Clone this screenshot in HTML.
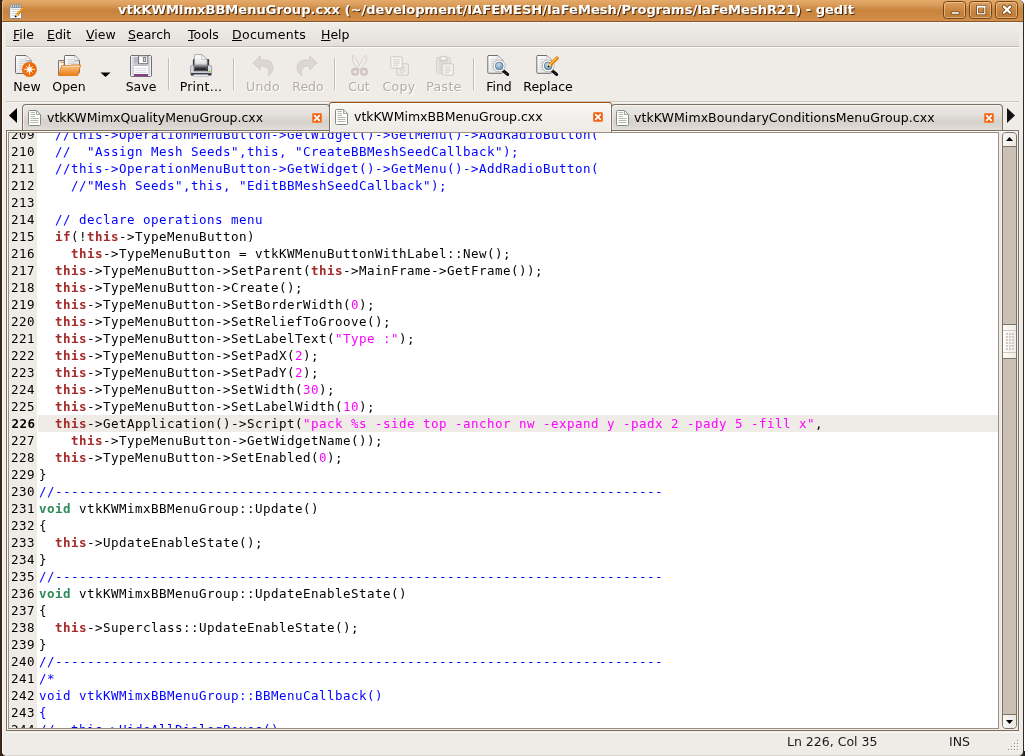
<!DOCTYPE html>
<html><head><meta charset="utf-8"><title>gedit</title>
<style>

html,body{margin:0;padding:0}
body{width:1025px;height:756px;overflow:hidden;position:relative;background:#fff;
 font-family:"DejaVu Sans","Liberation Sans",sans-serif;font-size:12.5px;color:#000;line-height:16px}
.a{position:absolute}
.mi,.tl,.tabtxt,.st,#ttext{will-change:transform}
#frame{left:0;top:0;width:1024px;height:756px;background:linear-gradient(to right,#46270f 0,#46270f 1px,#2b221b 1px,#2b221b 2px,#3a2a20 2px,#3a2a20 1022px,#2e2b29 1022px);border-radius:0 5px 0 0}
#win{left:2px;top:0;width:1021px;height:756px;background:#efebe7;border-radius:3px 5px 5px 5px;overflow:hidden;box-shadow:inset 1px 0 0 #fbfaf9, inset 0 -1px 0 #d9d2ca}
#title{left:0;top:0;width:1021px;height:21px;box-shadow:inset 1px 0 0 rgba(255,225,185,.5);border-bottom:1px solid #85562a;
 background:linear-gradient(to bottom,#e6aa6a 0px,#d99c5a 5px,#c8843c 10px,#c9853d 12px,#d38f4b 21px)}
#ttext{left:0;top:1px;width:968px;text-align:center;font-weight:bold;color:#fff;font-size:13.05px;
 text-shadow:1px 1px 0 #4a2a10;white-space:nowrap;line-height:18px}
.wb{top:1px;width:23px;height:18px;border:1px solid #704619;border-radius:3.5px;box-sizing:border-box;
 background:linear-gradient(to bottom,#dda063,#c88640 50%,#bd7b36);box-shadow:inset 0 0 0 1px rgba(255,222,175,.5)}
#menubar{left:4px;top:22px;width:1013px;height:25px;border-top:1px solid #faf9f7;border-bottom:1px solid #c6bcb1;box-sizing:border-box;
 background:linear-gradient(to bottom,#f0ede9,#eae6e1 50%,#e4dfd9)}
.mi{top:27px;white-space:nowrap}
.mi u{text-decoration:underline;text-underline-offset:1px;text-decoration-thickness:1px}
#tbtop{left:4px;top:47px;width:1013px;height:1px;background:#fbfaf9}
#tbbot{left:4px;top:101px;width:1013px;height:1px;background:#cfc6bb;box-shadow:0 1px 0 #f6f4f1}
.tl{top:79px;white-space:nowrap;text-align:center}
.dis{color:#b5ada3;text-shadow:1px 1px 0 #fff}
.sep{top:58px;width:1px;height:32px;background:#c5bdb3;box-shadow:1px 0 0 #fbfaf8}
.ic{overflow:visible}
/* tabs */
.tab{box-sizing:border-box;border:1px solid #7d7262;border-bottom:none;border-radius:4px 4px 0 0;
 background:linear-gradient(to bottom,#ebe8e4 0,#e5e1dc 35%,#d7d2cb 62%,#dad5cf 80%,#e4e0db 100%);box-shadow:inset 1px 1px 0 rgba(255,255,255,.5)}
.tabtxt{white-space:nowrap}
.cl{width:10px;height:10px;background:#f0600f;border-radius:2px}
/* editor */
#nbframe{left:4px;top:130px;width:1013px;height:601px;box-sizing:border-box;border:1px solid #7d7262;box-shadow:inset 1px 1px 0 #fbfaf9}
#view{position:absolute;left:6px;top:132px;width:991px;height:597px;box-sizing:border-box;border:1px solid #9c9080;background:#fff;overflow:hidden}
#gutter{position:absolute;left:0;top:0;width:28px;height:600px;background:#efebe7}
#code{will-change:transform;position:absolute;left:0;top:-7px;width:1000px;font-family:"DejaVu Sans Mono","Liberation Mono",monospace;font-size:12.5px;letter-spacing:0.4744px;line-height:17px;white-space:pre}
.row{height:17px;position:relative}
.row .no{position:absolute;left:2px;top:0}
.row .tx{position:absolute;left:30px;top:0}
.row.cur::before{content:"";position:absolute;left:29px;top:0;width:970px;height:17px;background:#efebe7}
.row.cur .no{font-weight:bold;left:2.5px}
.c{color:#0000ff}.k{color:#a52a2a;font-weight:bold}.t{color:#2e8b57;font-weight:bold}.s{color:#ff00ff}
/* scrollbar */
#sb{left:1000px;top:132px;width:15px;height:597px;box-sizing:border-box;border:1px solid #7d7162;border-radius:4px;background:#cac0b5;overflow:hidden}
.sbtn{left:0;width:13px;height:13px;background:linear-gradient(to right,#f9f8f6,#ece8e3)}
.sbtn svg{position:absolute;left:0;top:0}
#thumb{left:-1px;top:191px;width:15px;height:35px;box-sizing:border-box;border:1px solid #7d7162;background:linear-gradient(to right,#fdfdfc,#eeebe7)}
#thumb i{position:absolute;left:0;width:13px;height:1px;background:#cfc8bf}
#grip{position:absolute;left:3px;top:8px;width:8px;height:17px;background-image:radial-gradient(circle at 1px 1px,#d2cbc3 0.8px,rgba(255,255,255,0) 1.2px);background-size:3px 3px}
/* status */
.st{top:734px;white-space:nowrap;color:#1a1a1a}

</style></head>
<body>
<div id="frame" class="a"></div><div class="a" style="left:1024px;top:751px;width:1px;height:5px;background:#1d1a18"></div>
<div id="win" class="a">
<div id="title" class="a"></div>
<div id="ttext" class="a">vtkKWMimxBBMenuGroup.cxx (~/development/IAFEMESH/IaFeMesh/Programs/IaFeMeshR21) - gedit</div>
<div class="a wb" style="left:941px"></div><div class="a wb" style="left:967px"></div><div class="a wb" style="left:993px"></div>
<div id="menubar" class="a"></div>
<div class="a mi" style="left:11px;letter-spacing:0px"><u>F</u>ile</div><div class="a mi" style="left:45px;letter-spacing:0px"><u>E</u>dit</div><div class="a mi" style="left:84px;letter-spacing:0px"><u>V</u>iew</div><div class="a mi" style="left:126.3px;letter-spacing:0px"><u>S</u>earch</div><div class="a mi" style="left:185.5px;letter-spacing:0px"><u>T</u>ools</div><div class="a mi" style="left:230.2px;letter-spacing:0.3px"><u>D</u>ocuments</div><div class="a mi" style="left:319px;letter-spacing:0px"><u>H</u>elp</div>
<div id="tbtop" class="a"></div><div id="tbbot" class="a"></div>
<div class="a tl" style="left:-15.5px;width:80px">New</div><div class="a tl" style="left:27px;width:80px">Open</div><div class="a tl" style="left:99px;width:80px">Save</div><div class="a tl" style="left:159.3px;width:80px"><span style="letter-spacing:.25px">Print...</span></div><div class="a tl dis" style="left:220.7px;width:80px"><span style="letter-spacing:.3px">Undo</span></div><div class="a tl dis" style="left:265.5px;width:80px">Redo</div><div class="a tl dis" style="left:317px;width:80px">Cut</div><div class="a tl dis" style="left:356.8px;width:80px"><span style="letter-spacing:.3px">Copy</span></div><div class="a tl dis" style="left:402.2px;width:80px"><span style="letter-spacing:.4px">Paste</span></div><div class="a tl" style="left:456.5px;width:80px">Find</div><div class="a tl" style="left:505.5px;width:80px">Replace</div><div class="a sep" style="left:166px"></div><div class="a sep" style="left:231px"></div><div class="a sep" style="left:332px"></div><div class="a sep" style="left:471px"></div>
<div class="a tab" style="left:20px;top:104px;width:308px;height:27px"></div>
<div class="a tab" style="left:609px;top:104px;width:392px;height:27px"></div>
<div id="nbframe" class="a"></div><div class="a" style="left:4px;top:732px;width:1014px;height:1px;background:#f9f8f6"></div><div class="a" style="left:1017px;top:131px;width:1px;height:601px;background:#f5f3f0"></div>
<div class="a" id="atab" style="left:327px;top:102px;width:283px;height:30px;box-sizing:border-box;border:1px solid #7d7262;border-top:1px solid #9a4c1c;border-bottom:none;border-radius:3px 3px 0 0;background:linear-gradient(to bottom,#f8f7f5,#f1eeea 60%,#efebe7);box-shadow:inset 1px 1px 0 #fff,inset -1px 0 0 #fbfaf9"></div>
<div class="a tabtxt" style="left:45px;top:110px">vtkKWMimxQualityMenuGroup.cxx</div>
<div class="a tabtxt" style="left:352px;top:109px">vtkKWMimxBBMenuGroup.cxx</div>
<div class="a tabtxt" style="left:632px;top:110px;letter-spacing:.07px">vtkKWMimxBoundaryConditionsMenuGroup.cxx</div>
<svg class="a" style="left:-2px;top:0;overflow:visible" width="1025" height="140" viewBox="0 0 1025 140"><defs>
<linearGradient id="gdoc" x1="0" y1="0" x2="1" y2="1"><stop offset="0" stop-color="#ffffff"/><stop offset="1" stop-color="#d9d9d9"/></linearGradient>
<linearGradient id="gfold" x1="0" y1="0" x2="0" y2="1"><stop offset="0" stop-color="#f8cb9c"/><stop offset=".45" stop-color="#f3a452"/><stop offset="1" stop-color="#ee8014"/></linearGradient>
<radialGradient id="gstar"><stop offset="0" stop-color="#fff"/><stop offset=".3" stop-color="#fff"/><stop offset="1" stop-color="#fff" stop-opacity="0"/></radialGradient>
<radialGradient id="glens" cx=".4" cy=".3" r=".8"><stop offset="0" stop-color="#c4d9ea"/><stop offset="1" stop-color="#5d93bd"/></radialGradient>
<linearGradient id="gpaper" x1="0" y1="0" x2="0" y2="1"><stop offset="0" stop-color="#ffffff"/><stop offset=".55" stop-color="#e4e4e4"/><stop offset=".8" stop-color="#555"/><stop offset="1" stop-color="#000"/></linearGradient>
<linearGradient id="gpen" x1="0" y1="0" x2="1" y2="1"><stop offset="0" stop-color="#ffd84a"/><stop offset=".5" stop-color="#f08c12"/><stop offset="1" stop-color="#c85a00"/></linearGradient>
</defs><rect x="9.7" y="5.7" width="11.8" height="12.8" rx="1" fill="#fff" stroke="#7c8b95" stroke-width="1"/><rect x="10.6" y="6.8" width="10" height="1.3" fill="#66747e" fill-opacity=".75"/><rect x="10.90" y="4.1" width="1.35" height="3.6" rx=".65" fill="#fff" stroke="#5b6770" stroke-width=".5"/><rect x="13.02" y="4.1" width="1.35" height="3.6" rx=".65" fill="#fff" stroke="#5b6770" stroke-width=".5"/><rect x="15.14" y="4.1" width="1.35" height="3.6" rx=".65" fill="#fff" stroke="#5b6770" stroke-width=".5"/><rect x="17.26" y="4.1" width="1.35" height="3.6" rx=".65" fill="#fff" stroke="#5b6770" stroke-width=".5"/><rect x="19.38" y="4.1" width="1.35" height="3.6" rx=".65" fill="#fff" stroke="#5b6770" stroke-width=".5"/><path d="M11.5,9.5 H19.5" stroke="#d3d6d8" stroke-width="1"/><path d="M11.5,11.5 H19.5" stroke="#d3d6d8" stroke-width="1"/><path d="M11.5,13.5 H19.5" stroke="#d3d6d8" stroke-width="1"/><path d="M11.5,15.5 H19.5" stroke="#d3d6d8" stroke-width="1"/><path d="M17.14,14.82 L23.2,8.6" stroke="#e27c0e" stroke-width="2.8" stroke-linecap="round"/><path d="M17.57,15.24 L23.63,9.02" stroke="#ffd23c" stroke-width="0.92" stroke-linecap="round" transform="translate(-0.72,-0.70)"/><path d="M15.6,16.4 L17.14,14.82" stroke="#f5dd9a" stroke-width="2.24"/><circle cx="15.6" cy="16.4" r=".9" fill="#000"/><path d="M16,55.5 H26.0 L31.0,60.5 V72.5 Q31.0,73.5 30.0,73.5 H16.5 Q15.5,73.5 15.5,72.5 V56.5 Q15.5,55.5 16.5,55.5Z" fill="url(#gdoc)" stroke="#6e6e6e" stroke-width="1"/><path d="M26.0,55.5 V60.5 H31.0Z" fill="#fbfbfb" stroke="#6e6e6e" stroke-width=".6" stroke-opacity=".5"/><path d="M26.8,61.0 H30.5" stroke="#8a8a8a" stroke-width="1" stroke-opacity=".7"/><path d="M18.5,59.5 H25.0" stroke="#d6d6d6" stroke-width="1"/><path d="M18.5,61.5 H27.5" stroke="#d6d6d6" stroke-width="1"/><path d="M18.5,63.5 H27.5" stroke="#d6d6d6" stroke-width="1"/><path d="M18.5,65.5 H27.5" stroke="#d6d6d6" stroke-width="1"/><path d="M18.5,67.5 H27.5" stroke="#d6d6d6" stroke-width="1"/><path d="M18.5,69.5 H27.5" stroke="#d6d6d6" stroke-width="1"/><circle cx="29.4" cy="69.4" r="7.5" fill="#f26a05"/><circle cx="29.4" cy="69.4" r="3.6" fill="url(#gstar)"/><path d="M29.4,69.4 L34.60,69.40" stroke="#fff" stroke-width="1" stroke-opacity=".9" stroke-linecap="round"/><path d="M29.4,69.4 L32.37,72.37" stroke="#fff" stroke-width="1" stroke-opacity=".9" stroke-linecap="round"/><path d="M29.4,69.4 L29.40,74.60" stroke="#fff" stroke-width="1" stroke-opacity=".9" stroke-linecap="round"/><path d="M29.4,69.4 L26.43,72.37" stroke="#fff" stroke-width="1" stroke-opacity=".9" stroke-linecap="round"/><path d="M29.4,69.4 L24.20,69.40" stroke="#fff" stroke-width="1" stroke-opacity=".9" stroke-linecap="round"/><path d="M29.4,69.4 L26.43,66.43" stroke="#fff" stroke-width="1" stroke-opacity=".9" stroke-linecap="round"/><path d="M29.4,69.4 L29.40,64.20" stroke="#fff" stroke-width="1" stroke-opacity=".9" stroke-linecap="round"/><path d="M29.4,69.4 L32.37,66.43" stroke="#fff" stroke-width="1" stroke-opacity=".9" stroke-linecap="round"/><circle cx="29.4" cy="69.4" r="2" fill="#fff"/><path d="M65,55.5 H74.8 L79.5,60.2 V72.0 Q79.5,73.0 78.5,73.0 H65.5 Q64.5,73.0 64.5,72.0 V56.5 Q64.5,55.5 65.5,55.5Z" fill="url(#gdoc)" stroke="#6e6e6e" stroke-width="1"/><path d="M74.8,55.5 V60.2 H79.5Z" fill="#fbfbfb" stroke="#6e6e6e" stroke-width=".6" stroke-opacity=".5"/><path d="M75.6,60.7 H79" stroke="#8a8a8a" stroke-width="1" stroke-opacity=".7"/><path d="M67.5,59.5 H73.5" stroke="#d6d6d6" stroke-width="1"/><path d="M67.5,61.5 H76" stroke="#d6d6d6" stroke-width="1"/><path d="M67.5,63.5 H76" stroke="#d6d6d6" stroke-width="1"/><path d="M67.5,65.5 H76" stroke="#d6d6d6" stroke-width="1"/><path d="M67.5,67.5 H76" stroke="#d6d6d6" stroke-width="1"/><path d="M67.5,69.5 H76" stroke="#d6d6d6" stroke-width="1"/><path d="M58.6,60.6 H64.2 V75 H58.6Z" fill="#fbfaf8" stroke="#6a6a6a" stroke-width="1"/><path d="M60.2,62.4 H64" stroke="#f08a1e" stroke-width="1"/><path d="M61.6,65.6 H70.6 L71.2,64.9 H80.6 L77.9,75.4 H58.6Z" fill="url(#gfold)" stroke="#d8730f" stroke-width=".8"/><path d="M62.2,66.4 H79.6" stroke="#fbe0c0" stroke-width=".8"/><path d="M100.5,72.5 H110.5 L105.5,77Z" fill="#000"/><rect x="130.5" y="55.5" width="21" height="21" rx="1.5" fill="#d6d6de" stroke="#6f6f6f" stroke-width="1"/><rect x="131.5" y="56.5" width="19" height="19" fill="none" stroke="#efeff6" stroke-width="1"/><rect x="134" y="57" width="4.5" height="6.5" fill="#b9b9c2"/><rect x="138.5" y="55.8" width="9.3" height="7.9" fill="#fafafd" stroke="#747474" stroke-width="1"/><rect x="143.4" y="57.5" width="2.2" height="4" fill="#ddd" stroke="#777" stroke-width=".9"/><path d="M134,65.2 H148" stroke="#b5b5be" stroke-width="1"/><rect x="134" y="66" width="14" height="8.2" fill="#fdfdfd"/><path d="M135.2,68.4 H146.8" stroke="#dcdce2" stroke-width="1"/><path d="M135.2,70.4 H146.8" stroke="#dcdce2" stroke-width="1"/><path d="M135.2,72.4 H146.8" stroke="#dcdce2" stroke-width="1"/><rect x="134" y="74" width="14" height="2.2" fill="#8b3d80"/><rect x="192.9" y="59" width="16.2" height="7" rx="1" fill="#3a3a3a"/><rect x="190.6" y="65.4" width="21" height="10" rx="1.5" fill="#dcdce8" stroke="#8d8d99" stroke-width=".8"/><rect x="193.8" y="65.6" width="14.2" height="5.6" fill="#000"/><path d="M195.2,54.6 H201.8 L207.2,59.4 V70.4 H194.4 V55.4 Q194.4,54.6 195.2,54.6Z" fill="url(#gpaper)" stroke="#888" stroke-width=".7"/><path d="M201.8,54.8 V59.4 H207Z" fill="#f6f6f6" stroke="#999" stroke-width=".5"/><rect x="191" y="72.9" width="20.2" height="2.5" fill="#3e3e44"/><rect x="193.5" y="74.6" width="14.6" height="1.8" rx=".6" fill="#f4f4fb" stroke="#9a9aa4" stroke-width=".5"/><circle cx="209.4" cy="71.3" r=".9" fill="#7ad21a"/><path d="M252.9,62.9 L260.3,56 L260.3,60.1 L266,60.1 C271,60.5 273.5,65 272.8,69 C272.3,72 270,75 268,75.8 C269.5,72 268.5,68.5 266,67 C264.5,66 262.5,65.9 260.3,65.9 L260.3,69.8 Z" fill="#dcd7d2" stroke="#cfc8c2" stroke-width=".8"/><g transform="translate(570,0) scale(-1,1)"><path d="M252.9,62.9 L260.3,56 L260.3,60.1 L266,60.1 C271,60.5 273.5,65 272.8,69 C272.3,72 270,75 268,75.8 C269.5,72 268.5,68.5 266,67 C264.5,66 262.5,65.9 260.3,65.9 L260.3,69.8 Z" fill="#dcd7d2" stroke="#cfc8c2" stroke-width=".8"/></g><path d="M353.2,55.2 C351.4,58.6 352.4,62.6 359,69.4 L360.8,67.6 C357.8,62.6 355.8,58.6 353.2,55.2Z" fill="#f3f0ee" stroke="#cfc6c1" stroke-width=".8"/><path d="M365.6,55.2 C367.4,58.6 366.4,62.6 359.8,69.4 L358,67.6 C361,62.6 363,58.6 365.6,55.2Z" fill="#f3f0ee" stroke="#cfc6c1" stroke-width=".8"/><circle cx="355.1" cy="71.8" r="2.8" fill="#f1eeeb" stroke="#c9beba" stroke-width="2.3"/><circle cx="364" cy="71.8" r="2.8" fill="#f1eeeb" stroke="#c9beba" stroke-width="2.3"/><circle cx="355.1" cy="71.8" r="2.8" fill="none" stroke="#dbd3cf" stroke-width=".7"/><circle cx="364" cy="71.8" r="2.8" fill="none" stroke="#dbd3cf" stroke-width=".7"/><rect x="396.9" y="63.8" width="11.4" height="11.4" rx="1" fill="#f0eeeb" stroke="#cfc8c2" stroke-width="1"/><path d="M399.4,66.8 H405.79999999999995" stroke="#d6d0ca" stroke-width="1"/><path d="M399.4,68.8 H405.79999999999995" stroke="#d6d0ca" stroke-width="1"/><path d="M399.4,70.8 H405.79999999999995" stroke="#d6d0ca" stroke-width="1"/><path d="M399.4,72.8 H403.79999999999995" stroke="#d6d0ca" stroke-width="1"/><rect x="390.8" y="56.8" width="11.4" height="11.4" rx="1" fill="#f6f4f2" stroke="#cfc8c2" stroke-width="1"/><path d="M393.3,59.8 H399.7" stroke="#d6d0ca" stroke-width="1"/><path d="M393.3,61.8 H399.7" stroke="#d6d0ca" stroke-width="1"/><path d="M393.3,63.8 H399.7" stroke="#d6d0ca" stroke-width="1"/><path d="M393.3,65.8 H397.7" stroke="#d6d0ca" stroke-width="1"/><rect x="436.8" y="57.8" width="13.4" height="15.4" rx="1.2" fill="#dfdad5" stroke="#cbc4be" stroke-width="1"/><rect x="437.8" y="58.8" width="11.4" height="13.4" fill="none" stroke="#efece9" stroke-width="1"/><path d="M439.6,60.4 L440.8,56.4 H446.2 L447.4,60.4Z" fill="#f1efec" stroke="#cbc4be" stroke-width=".9"/><rect x="442.2" y="63.9" width="11.2" height="11.3" rx="1" fill="#f4f2ef" stroke="#cfc8c2" stroke-width="1"/><path d="M444.7,66.9 H450.9" stroke="#d6d0ca" stroke-width="1"/><path d="M444.7,68.9 H450.9" stroke="#d6d0ca" stroke-width="1"/><path d="M444.7,70.9 H450.9" stroke="#d6d0ca" stroke-width="1"/><path d="M444.7,72.9 H448.9" stroke="#d6d0ca" stroke-width="1"/><path d="M488.3,55.5 H497.8 L502.8,60.5 V72.3 Q502.8,73.3 501.8,73.3 H488.8 Q487.8,73.3 487.8,72.3 V56.5 Q487.8,55.5 488.8,55.5Z" fill="url(#gdoc)" stroke="#6e6e6e" stroke-width="1"/><path d="M497.8,55.5 V60.5 H502.8Z" fill="#fbfbfb" stroke="#6e6e6e" stroke-width=".6" stroke-opacity=".5"/><path d="M498.6,61.0 H502.3" stroke="#8a8a8a" stroke-width="1" stroke-opacity=".7"/><path d="M490.8,59.5 H496.8" stroke="#d6d6d6" stroke-width="1"/><path d="M490.8,61.5 H499.3" stroke="#d6d6d6" stroke-width="1"/><path d="M490.8,63.5 H499.3" stroke="#d6d6d6" stroke-width="1"/><path d="M490.8,65.5 H499.3" stroke="#d6d6d6" stroke-width="1"/><path d="M490.8,67.5 H499.3" stroke="#d6d6d6" stroke-width="1"/><path d="M490.8,69.5 H499.3" stroke="#d6d6d6" stroke-width="1"/><path d="M503.4,70.80000000000001 L507.59999999999997,74.4" stroke="#000" stroke-width="3" stroke-linecap="round"/><path d="M504.5,71.80000000000001 L507.2,74.10000000000001" stroke="#666" stroke-width="1" stroke-dasharray="1,1"/><circle cx="499.2" cy="65.9" r="6" fill="#fff" stroke="#b0b0b0" stroke-width=".9"/><circle cx="499.2" cy="65.9" r="3.9" fill="url(#glens)" stroke="#5f6f7c" stroke-width=".8"/><path d="M537.3,55.5 H546.8 L551.8,60.5 V72.3 Q551.8,73.3 550.8,73.3 H537.8 Q536.8,73.3 536.8,72.3 V56.5 Q536.8,55.5 537.8,55.5Z" fill="url(#gdoc)" stroke="#6e6e6e" stroke-width="1"/><path d="M546.8,55.5 V60.5 H551.8Z" fill="#fbfbfb" stroke="#6e6e6e" stroke-width=".6" stroke-opacity=".5"/><path d="M547.5999999999999,61.0 H551.3" stroke="#8a8a8a" stroke-width="1" stroke-opacity=".7"/><path d="M539.8,59.5 H545.8" stroke="#d6d6d6" stroke-width="1"/><path d="M539.8,61.5 H548.3" stroke="#d6d6d6" stroke-width="1"/><path d="M539.8,63.5 H548.3" stroke="#d6d6d6" stroke-width="1"/><path d="M539.8,65.5 H548.3" stroke="#d6d6d6" stroke-width="1"/><path d="M539.8,67.5 H548.3" stroke="#d6d6d6" stroke-width="1"/><path d="M539.8,69.5 H548.3" stroke="#d6d6d6" stroke-width="1"/><path d="M552.4000000000001,70.80000000000001 L556.6,74.4" stroke="#000" stroke-width="3" stroke-linecap="round"/><path d="M553.5,71.80000000000001 L556.2,74.10000000000001" stroke="#666" stroke-width="1" stroke-dasharray="1,1"/><circle cx="548.2" cy="65.9" r="6" fill="#fff" stroke="#b0b0b0" stroke-width=".9"/><circle cx="548.2" cy="65.9" r="3.9" fill="url(#glens)" stroke="#5f6f7c" stroke-width=".8"/><path d="M550.17,64.86 L557,58.2" stroke="#e27c0e" stroke-width="3.5" stroke-linecap="round"/><path d="M550.59,65.29 L557.42,58.63" stroke="#ffd23c" stroke-width="1.16" stroke-linecap="round" transform="translate(-0.70,-0.72)"/><path d="M548.6,66.4 L550.17,64.86" stroke="#f5dd9a" stroke-width="2.80"/><circle cx="548.6" cy="66.4" r=".9" fill="#000"/><path d="M29.5,110.5 H36.5 L40.5,114.5 V124.5 Q40.5,125.5 39.5,125.5 H29.5 Q28.5,125.5 28.5,124.5 V111.5 Q28.5,110.5 29.5,110.5Z" fill="#fff" stroke="#858a83" stroke-width="1"/><path d="M36.5,111 V114.5 H40" fill="#f2f2f0" stroke="#9a9e98" stroke-width=".9"/><path d="M30.5,112.5 H35" stroke="#b3b8aa" stroke-width="1"/><path d="M30.5,114.5 H35" stroke="#b3b8aa" stroke-width="1"/><path d="M30.5,116.5 H35" stroke="#b3b8aa" stroke-width="1"/><path d="M30.5,118.5 H38.5" stroke="#b3b8aa" stroke-width="1"/><path d="M30.5,120.5 H38.5" stroke="#b3b8aa" stroke-width="1"/><path d="M30.5,122.5 H38.5" stroke="#b3b8aa" stroke-width="1"/><path d="M336.5,109.5 H343.5 L347.5,113.5 V123.5 Q347.5,124.5 346.5,124.5 H336.5 Q335.5,124.5 335.5,123.5 V110.5 Q335.5,109.5 336.5,109.5Z" fill="#fff" stroke="#858a83" stroke-width="1"/><path d="M343.5,110 V113.5 H347" fill="#f2f2f0" stroke="#9a9e98" stroke-width=".9"/><path d="M337.5,111.5 H342" stroke="#b3b8aa" stroke-width="1"/><path d="M337.5,113.5 H342" stroke="#b3b8aa" stroke-width="1"/><path d="M337.5,115.5 H342" stroke="#b3b8aa" stroke-width="1"/><path d="M337.5,117.5 H345.5" stroke="#b3b8aa" stroke-width="1"/><path d="M337.5,119.5 H345.5" stroke="#b3b8aa" stroke-width="1"/><path d="M337.5,121.5 H345.5" stroke="#b3b8aa" stroke-width="1"/><path d="M617.5,110.5 H624.5 L628.5,114.5 V124.5 Q628.5,125.5 627.5,125.5 H617.5 Q616.5,125.5 616.5,124.5 V111.5 Q616.5,110.5 617.5,110.5Z" fill="#fff" stroke="#858a83" stroke-width="1"/><path d="M624.5,111 V114.5 H628" fill="#f2f2f0" stroke="#9a9e98" stroke-width=".9"/><path d="M618.5,112.5 H623" stroke="#b3b8aa" stroke-width="1"/><path d="M618.5,114.5 H623" stroke="#b3b8aa" stroke-width="1"/><path d="M618.5,116.5 H623" stroke="#b3b8aa" stroke-width="1"/><path d="M618.5,118.5 H626.5" stroke="#b3b8aa" stroke-width="1"/><path d="M618.5,120.5 H626.5" stroke="#b3b8aa" stroke-width="1"/><path d="M618.5,122.5 H626.5" stroke="#b3b8aa" stroke-width="1"/><path d="M17,108 V123 L9,115.5Z" fill="#000"/><path d="M1007,108 V123 L1015,115.5Z" fill="#111"/><rect x="312" y="113" width="10" height="10" rx="1.8" fill="#f0600f"/><rect x="312.5" y="113.5" width="9" height="9" rx="1.4" fill="none" stroke="#f58a4a" stroke-width=".8"/><path d="M314.7,115.7 L319.3,120.3 M319.3,115.7 L314.7,120.3" stroke="#fff" stroke-width="1.7" stroke-linecap="round"/><rect x="593" y="112" width="10" height="10" rx="1.8" fill="#f0600f"/><rect x="593.5" y="112.5" width="9" height="9" rx="1.4" fill="none" stroke="#f58a4a" stroke-width=".8"/><path d="M595.7,114.7 L600.3,119.3 M600.3,114.7 L595.7,119.3" stroke="#fff" stroke-width="1.7" stroke-linecap="round"/><rect x="984" y="113" width="10" height="10" rx="1.8" fill="#f0600f"/><rect x="984.5" y="113.5" width="9" height="9" rx="1.4" fill="none" stroke="#f58a4a" stroke-width=".8"/><path d="M986.7,115.7 L991.3,120.3 M991.3,115.7 L986.7,120.3" stroke="#fff" stroke-width="1.7" stroke-linecap="round"/><rect x="951.2" y="11.8" width="8" height="2.4" fill="#fff" stroke="#6b3e14" stroke-width=".8"/><rect x="977.6" y="6.6" width="7.2" height="7.2" fill="none" stroke="#6b3e14" stroke-width="2.6"/><rect x="977.6" y="6.6" width="7.2" height="7.2" fill="none" stroke="#fff" stroke-width="1.2"/><path d="M977,6.7 H985.4" stroke="#fff" stroke-width="1.8"/><path d="M1003.9,6.6 L1010.1,12.8 M1010.1,6.6 L1003.9,12.8" stroke="#6b3e14" stroke-width="3.8" stroke-linecap="round"/><path d="M1003.9,6.6 L1010.1,12.8 M1010.1,6.6 L1003.9,12.8" stroke="#fff" stroke-width="2.3" stroke-linecap="round"/></svg>

<div id="view"><div id="gutter"></div><div id="code"><div class="row"><span class="no">209</span><span class="tx">  <span class="c">//this-&gt;OperationMenuButton-&gt;GetWidget()-&gt;GetMenu()-&gt;AddRadioButton(</span></span></div><div class="row"><span class="no">210</span><span class="tx">  <span class="c">//  "Assign Mesh Seeds",this, "CreateBBMeshSeedCallback");</span></span></div><div class="row"><span class="no">211</span><span class="tx">  <span class="c">//this-&gt;OperationMenuButton-&gt;GetWidget()-&gt;GetMenu()-&gt;AddRadioButton(</span></span></div><div class="row"><span class="no">212</span><span class="tx">    <span class="c">//"Mesh Seeds",this, "EditBBMeshSeedCallback");</span></span></div><div class="row"><span class="no">213</span><span class="tx"></span></div><div class="row"><span class="no">214</span><span class="tx">  <span class="c">// declare operations menu</span></span></div><div class="row"><span class="no">215</span><span class="tx">  <span class="k">if</span>(!<span class="k">this</span>-&gt;TypeMenuButton)</span></div><div class="row"><span class="no">216</span><span class="tx">    <span class="k">this</span>-&gt;TypeMenuButton = vtkKWMenuButtonWithLabel::New();</span></div><div class="row"><span class="no">217</span><span class="tx">  <span class="k">this</span>-&gt;TypeMenuButton-&gt;SetParent(<span class="k">this</span>-&gt;MainFrame-&gt;GetFrame());</span></div><div class="row"><span class="no">218</span><span class="tx">  <span class="k">this</span>-&gt;TypeMenuButton-&gt;Create();</span></div><div class="row"><span class="no">219</span><span class="tx">  <span class="k">this</span>-&gt;TypeMenuButton-&gt;SetBorderWidth(<span class="s">0</span>);</span></div><div class="row"><span class="no">220</span><span class="tx">  <span class="k">this</span>-&gt;TypeMenuButton-&gt;SetReliefToGroove();</span></div><div class="row"><span class="no">221</span><span class="tx">  <span class="k">this</span>-&gt;TypeMenuButton-&gt;SetLabelText(<span class="s">"Type :"</span>);</span></div><div class="row"><span class="no">222</span><span class="tx">  <span class="k">this</span>-&gt;TypeMenuButton-&gt;SetPadX(<span class="s">2</span>);</span></div><div class="row"><span class="no">223</span><span class="tx">  <span class="k">this</span>-&gt;TypeMenuButton-&gt;SetPadY(<span class="s">2</span>);</span></div><div class="row"><span class="no">224</span><span class="tx">  <span class="k">this</span>-&gt;TypeMenuButton-&gt;SetWidth(<span class="s">30</span>);</span></div><div class="row"><span class="no">225</span><span class="tx">  <span class="k">this</span>-&gt;TypeMenuButton-&gt;SetLabelWidth(<span class="s">10</span>);</span></div><div class="row cur"><span class="no">226</span><span class="tx">  <span class="k">this</span>-&gt;GetApplication()-&gt;Script(<span class="s">"pack %s -side top -anchor nw -expand y -padx 2 -pady 5 -fill x"</span>,</span></div><div class="row"><span class="no">227</span><span class="tx">    <span class="k">this</span>-&gt;TypeMenuButton-&gt;GetWidgetName());</span></div><div class="row"><span class="no">228</span><span class="tx">  <span class="k">this</span>-&gt;TypeMenuButton-&gt;SetEnabled(<span class="s">0</span>);</span></div><div class="row"><span class="no">229</span><span class="tx">}</span></div><div class="row"><span class="no">230</span><span class="tx"><span class="c">//----------------------------------------------------------------------------</span></span></div><div class="row"><span class="no">231</span><span class="tx"><span class="t">void</span> vtkKWMimxBBMenuGroup::Update()</span></div><div class="row"><span class="no">232</span><span class="tx">{</span></div><div class="row"><span class="no">233</span><span class="tx">  <span class="k">this</span>-&gt;UpdateEnableState();</span></div><div class="row"><span class="no">234</span><span class="tx">}</span></div><div class="row"><span class="no">235</span><span class="tx"><span class="c">//----------------------------------------------------------------------------</span></span></div><div class="row"><span class="no">236</span><span class="tx"><span class="t">void</span> vtkKWMimxBBMenuGroup::UpdateEnableState()</span></div><div class="row"><span class="no">237</span><span class="tx">{</span></div><div class="row"><span class="no">238</span><span class="tx">  <span class="k">this</span>-&gt;Superclass::UpdateEnableState();</span></div><div class="row"><span class="no">239</span><span class="tx">}</span></div><div class="row"><span class="no">240</span><span class="tx"><span class="c">//----------------------------------------------------------------------------</span></span></div><div class="row"><span class="no">241</span><span class="tx"><span class="c">/*</span></span></div><div class="row"><span class="no">242</span><span class="tx"><span class="c">void vtkKWMimxBBMenuGroup::BBMenuCallback()</span></span></div><div class="row"><span class="no">243</span><span class="tx"><span class="c">{</span></span></div><div class="row"><span class="no">244</span><span class="tx"><span class="c">//  this-&gt;HideAllDialogBoxes();</span></span></div></div></div>

<div id="sb" class="a"><div class="a sbtn" style="top:0;border-bottom:1px solid #7d7162"><svg width="13" height="13"><path d="M3,8 H10 L6.5,4Z" fill="#000"/></svg></div><div class="a sbtn" style="bottom:0;border-top:1px solid #7d7162"><svg width="13" height="13"><path d="M3,5 H10 L6.5,9Z" fill="#000"/></svg></div><div id="thumb" class="a"><i style="top:5px"></i><i style="top:27px"></i><div id="grip"></div></div></div>
<svg class="a" style="left:1000px;top:736px" width="21" height="20"><rect x="16" y="5" width="1" height="1" fill="#fff"/><rect x="15" y="4" width="1" height="1" fill="#8f877f"/><rect x="13" y="8" width="1" height="1" fill="#fff"/><rect x="12" y="7" width="1" height="1" fill="#8f877f"/><rect x="16" y="8" width="1" height="1" fill="#fff"/><rect x="15" y="7" width="1" height="1" fill="#8f877f"/><rect x="10" y="11" width="1" height="1" fill="#fff"/><rect x="9" y="10" width="1" height="1" fill="#8f877f"/><rect x="13" y="11" width="1" height="1" fill="#fff"/><rect x="12" y="10" width="1" height="1" fill="#8f877f"/><rect x="16" y="11" width="1" height="1" fill="#fff"/><rect x="15" y="10" width="1" height="1" fill="#8f877f"/><rect x="7" y="14" width="1" height="1" fill="#fff"/><rect x="6" y="13" width="1" height="1" fill="#8f877f"/><rect x="10" y="14" width="1" height="1" fill="#fff"/><rect x="9" y="13" width="1" height="1" fill="#8f877f"/><rect x="13" y="14" width="1" height="1" fill="#fff"/><rect x="12" y="13" width="1" height="1" fill="#8f877f"/><rect x="16" y="14" width="1" height="1" fill="#fff"/><rect x="15" y="13" width="1" height="1" fill="#8f877f"/></svg><div class="a st" style="left:785px">Ln 226, Col 35</div>
<div class="a st" style="left:947px">INS</div>
</div>

</body></html>
